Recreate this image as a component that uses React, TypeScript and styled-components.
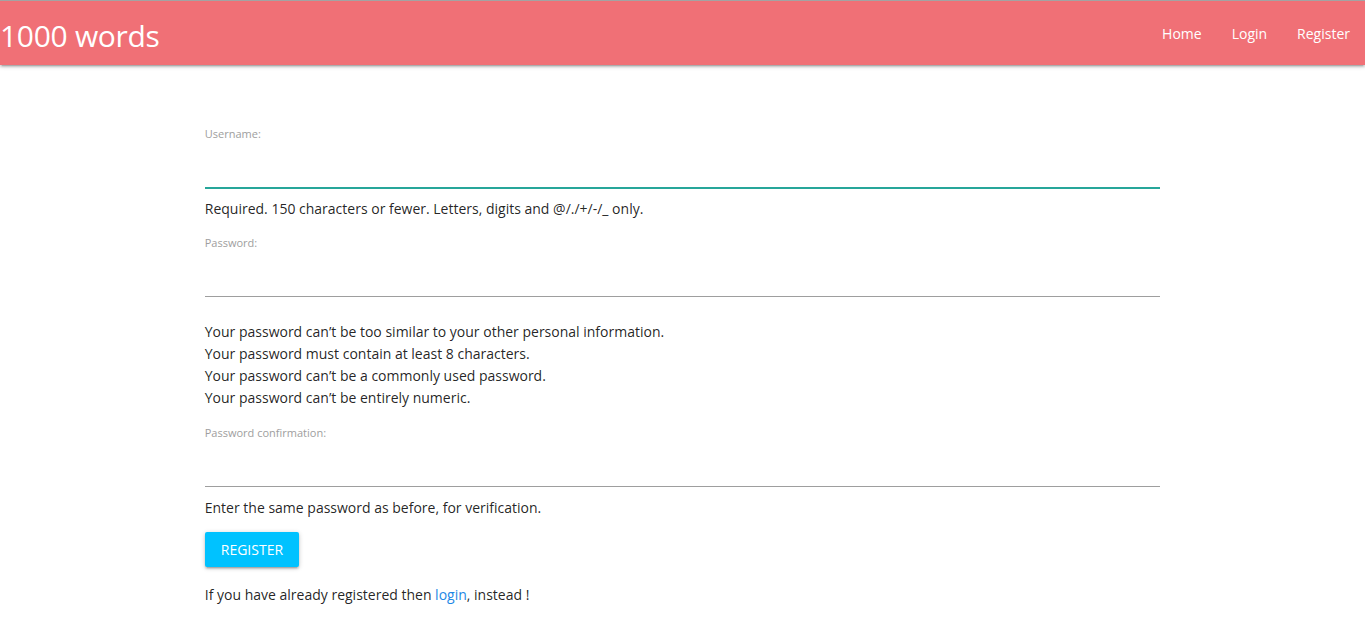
import React from "react";
import styled, { createGlobalStyle } from "styled-components";

const Global = createGlobalStyle`
  html { font-size: 15px; }
  body {
    margin: 0;
    font-family: "Open Sans", "Noto Sans", sans-serif;
    color: rgba(0,0,0,0.87);
    background: #fff;
  }
  * { box-sizing: border-box; }
`;

const Nav = styled.nav`
  height: 65px;
  border-top: 1px solid #a3a3a3;
  background: #f07076;
  display: flex;
  align-items: stretch;
  justify-content: space-between;
  box-shadow: 0 2px 2px 0 rgba(0,0,0,.14), 0 3px 1px -2px rgba(0,0,0,.12), 0 1px 5px 0 rgba(0,0,0,.2);
  color: #fff;
`;

const Logo = styled.a`
  font-size: 30px;
  line-height: 64px;
  padding-top: 3px;
  color: #fff;
  text-decoration: none;
  letter-spacing: -0.3px;
`;

const NavLinks = styled.ul`
  display: flex;
  list-style: none;
  margin: 0;
  padding: 0;
`;

const NavLink = styled.a`
  display: block;
  padding: 2px 15px 0 15px;
  line-height: 62px;
  font-size: 14px;
  color: #fff;
  text-decoration: none;
`;

const Container = styled.main`
  width: 70%;
  margin: 0 auto;
  padding-top: 61px;
  display: flex;
  flex-direction: column;
  gap: 15px;
`;

const Field = styled.div`
  display: flex;
  flex-direction: column;
`;

const Label = styled.label`
  font-size: 11px;
  line-height: 16px;
  color: #9e9e9e;
`;

const Input = styled.input<{ $focused?: boolean }>`
  height: 46px;
  width: 100%;
  border: none;
  border-bottom: 1px solid ${(p) => (p.$focused ? "#26a69a" : "#9e9e9e")};
  box-shadow: ${(p) => (p.$focused ? "0 1px 0 0 #26a69a" : "none")};
  outline: none;
  background: transparent;
  font-size: 15px;
  margin: 0 0 8px 0;
  padding: 0;
  caret-color: #000;
  font-family: inherit;
`;

const Help = styled.div`
  padding-top: 2px;
  font-size: 14px;
  line-height: 22px;
  color: rgba(0,0,0,0.87);
`;

const HelpList = styled.ul`
  list-style: none;
  margin: 16px 0 1px 0;
  padding: 0;
  font-size: 14px;
  line-height: 22px;
`;

const Button = styled.button`
  align-self: flex-start;
  height: 35px;
  padding: 0 16px;
  margin-top: -2px;
  border: none;
  border-radius: 2px;
  background: #00c2ff;
  color: #fff;
  font-family: inherit;
  font-size: 14px;
  text-transform: uppercase;
  box-shadow: 0 2px 2px 0 rgba(0,0,0,.14), 0 3px 1px -2px rgba(0,0,0,.12), 0 1px 5px 0 rgba(0,0,0,.2);
`;

const Footer = styled.p`
  margin: 2px 0 0;
  font-size: 14px;
  line-height: 22px;
`;

const Link = styled.a`
  color: #1e88e5;
  text-decoration: none;
`;

export default function App() {
  return (
    <>
      <Global />
      <Nav>
        <Logo href="#">1000 words</Logo>
        <NavLinks>
          <li><NavLink href="#">Home</NavLink></li>
          <li><NavLink href="#">Login</NavLink></li>
          <li><NavLink href="#">Register</NavLink></li>
        </NavLinks>
      </Nav>
      <Container>
        <Field>
          <Label htmlFor="u">Username:</Label>
          <Input id="u" $focused autoFocus />
          <Help>Required. 150 characters or fewer. Letters, digits and @/./+/-/_ only.</Help>
        </Field>
        <Field>
          <Label htmlFor="p1">Password:</Label>
          <Input id="p1" type="password" />
          <HelpList>
            <li>Your password can’t be too similar to your other personal information.</li>
            <li>Your password must contain at least 8 characters.</li>
            <li>Your password can’t be a commonly used password.</li>
            <li>Your password can’t be entirely numeric.</li>
          </HelpList>
        </Field>
        <Field>
          <Label htmlFor="p2">Password confirmation:</Label>
          <Input id="p2" type="password" />
          <Help>Enter the same password as before, for verification.</Help>
        </Field>
        <Button>Register</Button>
        <Footer>
          If you have already registered then <Link href="#">login</Link>, instead !
        </Footer>
      </Container>
    </>
  );
}
